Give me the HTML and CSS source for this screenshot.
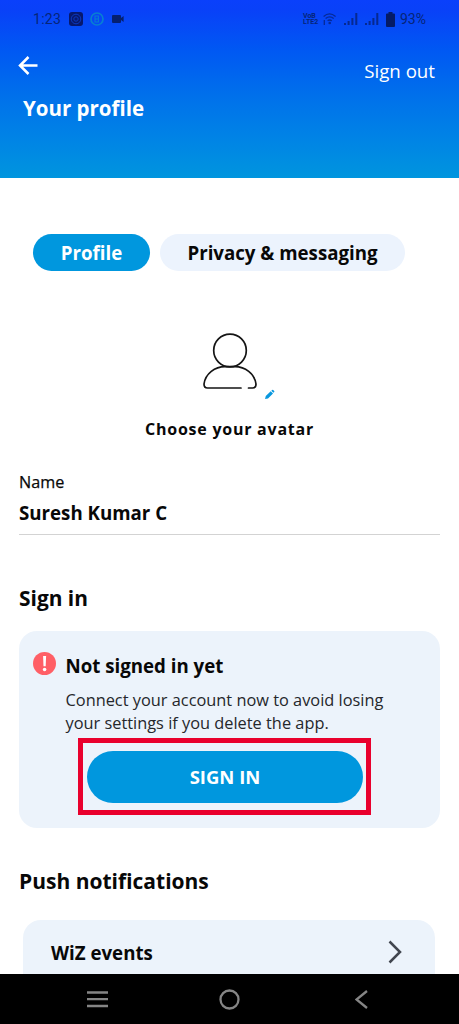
FILE: index.html
```html
<!DOCTYPE html>
<html lang="en">
<head>
<meta charset="utf-8">
<title>Your profile</title>
<link rel="stylesheet" href="styles.css">
</head>
<body>
<div class="screen">
  <header class="header">
    <div class="status">
      <div class="status-left">
        <span class="clock">1:23</span>
        <svg class="i-cam" width="14" height="14" viewBox="0 0 14 14"><rect width="14" height="14" rx="3" fill="#07186c"/><circle cx="7" cy="7" r="4.800" fill="none" stroke="#0a38c0" stroke-width="1"/><circle cx="7" cy="7" r="2.200" fill="none" stroke="#0a38c0" stroke-width="1"/></svg>
        <svg class="i-badge" width="14" height="14" viewBox="0 0 14 14"><circle cx="7" cy="7" r="6" fill="none" stroke="#087fd2" stroke-width="1.700"/><path d="M5 4h3.400v6H5zM5 7h3" fill="none" stroke="#087fd2" stroke-width="1.100"/></svg>
        <svg class="i-video" width="12" height="8" viewBox="0 0 12 8"><path d="M1 0h7q1 0 1 1v6q0 1-1 1H1q-1 0-1-1V1q0-1 1-1zM9 3l2.600-2v6L9 5z" fill="#05206f"/></svg>
      </div>
      <div class="status-right">
        <span class="volte"><span>VoB</span><span>LTE2</span></span>
        <svg class="i-wifi" width="13" height="12" viewBox="0 0 13 12"><g fill="none" stroke="#062a96" stroke-width="1.300"><path d="M.6 3.400Q6.500-1.600 12.600 3.400M2.600 5.600Q6.600 2.300 10.700 5.600M4.600 7.800Q6.600 6.200 8.800 7.800"/><path d="M1.300 7v5"/></g><circle cx="6.700" cy="10" r="1.300" fill="#062a96"/></svg>
        <svg class="i-sig" width="14" height="12" viewBox="0 0 14 12"><path d="M0 10h2v2H0zM3.600 8h2v4h-2zM7.400 5h2v7h-2zM11.300 0h2v12h-2z" fill="#06298f"/></svg>
        <svg class="i-sig2" width="14" height="12" viewBox="0 0 14 12"><path d="M0 10h2v2H0zM3.600 8h2v4h-2zM7.400 5h2v7h-2zM11.300 0h2v12h-2z" fill="#06298f"/></svg>
        <svg class="i-batt" width="9" height="15" viewBox="0 0 9 15"><path d="M2.500 0h4v1.500H8q1 0 1 1V14q0 1-1 1H1q-1 0-1-1V2.500q0-1 1-1h1.500z" fill="#051b66"/></svg>
        <span class="pct">93%</span>
      </div>
    </div>
    <div class="topbar">
      <svg class="back" width="20" height="20" viewBox="0 0 20 20"><path d="M19.500 9.500H2M10.500 1L2 9.500 10.500 18" fill="none" stroke="#fff" stroke-width="2.500"/></svg>
      <a class="signout">Sign out</a>
    </div>
    <h1 class="title">Your profile</h1>
  </header>

  <main class="main">
    <nav class="tabs">
      <span class="tab tab-on">Profile</span>
      <span class="tab tab-privacy">Privacy &amp; messaging</span>
    </nav>

    <section class="avatar">
      <svg width="76" height="70" viewBox="0 0 76 70">
        <g fill="none" stroke="#151515" stroke-width="1.700" stroke-linecap="round">
          <circle cx="30" cy="18.500" r="16.300"/>
          <path d="M41 56H7.500Q4 56 4 52C5.500 41.500 15 34.700 25 34.700H35C45 34.700 54.500 41.500 56 52Q56 56 52.500 56H48.500"/>
        </g>
        <path d="M65 67l.8-3 4.900-4.700 2.300 2.300-5 4.800zM71.300 58.700l.9-.8q.5-.4 1 0l1 1q.4.500 0 1l-.8.900z" fill="#0998de"/>
      </svg>
      <p class="choose">Choose your avatar</p>
    </section>

    <section class="field">
      <label class="label">Name</label>
      <div class="value">Suresh Kumar C</div>
    </section>

    <h2 class="heading">Sign in</h2>
    <section class="card">
      <div class="notice">
        <svg width="23" height="23" viewBox="0 0 23 23"><circle cx="11.500" cy="11.500" r="11.500" fill="#ff5f66"/><path d="M10.100 4h3l-.4 10.300h-2.200z" fill="#fff"/><circle cx="11.600" cy="17.500" r="1.800" fill="#fff"/></svg>
        <div>
          <h3 class="notice-title">Not signed in yet</h3>
          <p class="notice-text">Connect your account now to avoid losing<br>your settings if you delete the app.</p>
        </div>
      </div>
      <div class="highlight"><button class="signin">SIGN IN</button></div>
    </section>

    <h2 class="heading push">Push notifications</h2>
    <section class="row">
      <span class="row-title">WiZ events</span>
      <svg width="14" height="24" viewBox="0 0 14 24"><path d="M1.500 1.500L12 12 1.500 22.500" fill="none" stroke="#41464f" stroke-width="2.500"/></svg>
    </section>
  </main>

  <footer class="navbar">
    <svg width="21" height="17" viewBox="0 0 21 17"><path d="M0 1.500h21M0 8.200h21M0 15h21" stroke="#858585" stroke-width="2.300"/></svg>
    <svg width="21" height="21" viewBox="0 0 21 21"><circle cx="10.500" cy="10.500" r="9" fill="none" stroke="#858585" stroke-width="2.300"/></svg>
    <svg width="13" height="19" viewBox="0 0 13 19"><path d="M12 1L1.500 9.500 12 18" fill="none" stroke="#858585" stroke-width="2.300"/></svg>
  </footer>
</div>
</body>
</html>
```
FILE: styles.css
```css
* { box-sizing: border-box; }
body, h1, h2, h3, p { margin: 0; }
body { font-family: "Open Sans", "Noto Sans", sans-serif; color: #080808; background: #fff; }
svg { display: block; flex: none; }
.screen { width: 459px; height: 1024px; display: flex; flex-direction: column; overflow: hidden; white-space: nowrap; }

.header { height: 178px; flex: none; background: linear-gradient(#0a40fb 0, #0941f8 10px, #0058f3 50px, #0070eb 95px, #0082e6 135px, #0095de 178px); color: #fff; }
.status { height: 38px; display: flex; justify-content: space-between; align-items: center; padding: 0 33px; color: #062578; font-family: Roboto, sans-serif; }
.status-left, .status-right { display: flex; align-items: center; }
.clock { font-size: 14px; letter-spacing: .3px; width: 36px; }
.i-badge { margin-left: 7px; }
.i-video { margin-left: 8px; }
.volte { display: flex; flex-direction: column; width: 16px; font-size: 7px; line-height: 6px; font-weight: 700; }
.i-wifi { margin-left: 4px; }
.i-sig { margin-left: 8px; }
.i-sig2 { margin-left: 7px; }
.i-batt { margin-left: 7px; }
.pct { font-size: 14px; margin-left: 5px; }
.topbar { height: 57px; display: flex; justify-content: space-between; padding: 18px 24px 0 18px; }
.signout { font-size: 18.700px; line-height: 30px; }
.title { font-size: 20.500px; line-height: 26px; font-weight: 700; padding-left: 23px; }

.main { height: 796px; flex: none; overflow: hidden; padding: 56px 19px 0; }
.tabs { display: flex; gap: 10px; padding-left: 14px; }
.tab { height: 37px; border-radius: 19px; display: flex; align-items: center; justify-content: center; background: #ecf3fd; font-size: 18.700px; font-weight: 700; }
.tab-on { width: 117px; background: #0097de; color: #fff; }
.tab-privacy { width: 245px; }

.avatar { height: 199px; padding-top: 61px; display: flex; flex-direction: column; align-items: center; }
.avatar svg { margin-left: 16px; }
.choose { margin-top: 15px; font-size: 16px; line-height: 24px; font-weight: 700; letter-spacing: .750px; }

.field { height: 65px; border-bottom: 1px solid #d3d3d3; }
.label { display: block; font-size: 16.200px; line-height: 24px; font-weight: 500; -webkit-text-stroke: .25px #080808; }
.value { margin-top: 5px; font-size: 18.700px; line-height: 28px; font-weight: 700; }

.heading { margin-top: 48px; font-size: 20.900px; line-height: 30px; font-weight: 700; }
.card { margin-top: 18px; height: 197px; border-radius: 18px; background: #ecf3fb; padding: 21px 14px 0; }
.notice { display: flex; gap: 9.500px; }
.notice-title { font-size: 18.700px; line-height: 27px; font-weight: 700; }
.notice-text { margin-top: 10px; font-size: 16.350px; line-height: 23px; color: #25272b; }
.highlight { width: 293px; height: 77px; margin: 3px 0 0 45px; border: 5px solid #e9002d; padding: 8px 3px 0 4px; }
.signin { display: block; width: 276px; height: 52px; border: 0; border-radius: 26px; background: #0097de; color: #fff; font: 700 18.500px "Open Sans", sans-serif; padding: 0 0 1px; }
.push { margin-top: 38px; font-size: 21px; }
.row { margin: 24px 5px 0 4px; height: 80px; border-radius: 18px; background: #ecf3fb; padding: 20px 33px 0 28px; display: flex; justify-content: space-between; }
.row-title { font-size: 18.700px; line-height: 25px; font-weight: 700; }

.navbar { height: 50px; flex: none; background: #000; display: flex; justify-content: space-between; align-items: center; padding: 0 91px 0 87px; }
.navbar svg:nth-child(2) { margin-right: 4px; }
```
